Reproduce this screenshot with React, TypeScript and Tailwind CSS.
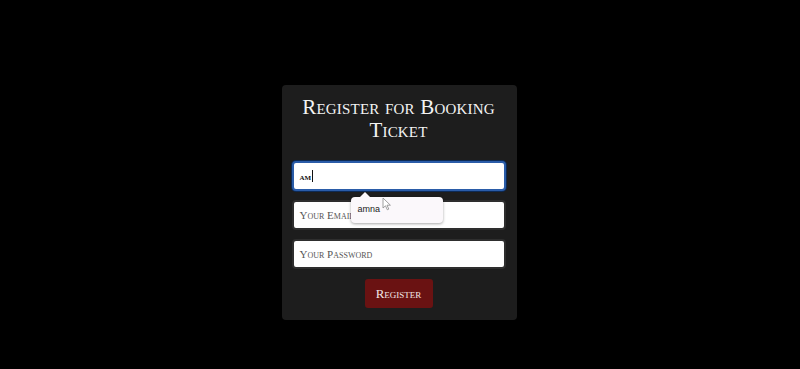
export default function App() {
    return (
        <div className="w-[800px] h-[369px] bg-black pt-[85px] font-['Liberation_Serif',serif]">
            <div className="relative mx-auto w-[235px] h-[235px] translate-x-[-1px] rounded-[4px] bg-[#1d1d1d] pl-[10px] pr-[11px] pt-[11px]">
                {/* Title */}
                <h1 className="text-center text-[21px] leading-[23px] text-[#f4f4f4] [font-variant:small-caps] tracking-[0.2px]">
                    Register for Booking Ticket
                </h1>

                {/* Form */}
                <div className="mt-[19px] flex flex-col gap-[9px]">
                    <div className="flex h-[30px] items-center rounded-[4px] border-2 border-[#2a5ca8] bg-white px-[6px] shadow-[0_0_0_1px_#0d2a55]">
                        <span className="text-[10px] font-bold text-[#111] [font-variant:small-caps]">am</span>
                        <span className="ml-px h-[12px] w-px bg-[#111]" />
                    </div>
                    <div className="flex h-[30px] items-center rounded-[4px] border-2 border-[#2e2e2e] bg-white px-[6px]">
                        <span className="text-[11px] text-[#555] [font-variant:small-caps]">Your Email</span>
                    </div>
                    <div className="flex h-[30px] items-center rounded-[4px] border-2 border-[#2e2e2e] bg-white px-[6px]">
                        <span className="text-[11px] text-[#555] [font-variant:small-caps]">Your Password</span>
                    </div>
                </div>

                {/* Button */}
                <div className="mt-[10px] flex justify-center">
                    <button className="h-[29px] w-[68px] rounded-[3px] bg-[#6a1212] text-[13px] text-[#f3e6e6] [font-variant:small-caps]">
                        Register
                    </button>
                </div>

                {/* Autocomplete popup */}
                <div className="absolute left-[69px] top-[112px] w-[92px] h-[26px] rounded-[4px] bg-[#fbf8fb] shadow-[0_1px_3px_rgba(0,0,0,0.35)] flex items-center pl-[7px]">
                    <span className="absolute -top-[5px] left-[8px] h-0 w-0 border-x-[6px] border-b-[6px] border-x-transparent border-b-[#fbf8fb]" />
                    <span className="text-[9px] text-[#222] font-['Liberation_Sans',sans-serif]">amna</span>
                </div>

                {/* Mouse cursor */}
                <svg className="absolute left-[100px] top-[112px]" width="10" height="14" viewBox="0 0 10 14">
                    <path d="M1 1 L1 11 L3.5 8.8 L5.3 12.8 L6.8 12.1 L5 8.2 L8.4 8.2 Z" fill="#fff" stroke="#888" strokeWidth="0.8" strokeLinejoin="round" />
                </svg>
            </div>
        </div>
    );
}
